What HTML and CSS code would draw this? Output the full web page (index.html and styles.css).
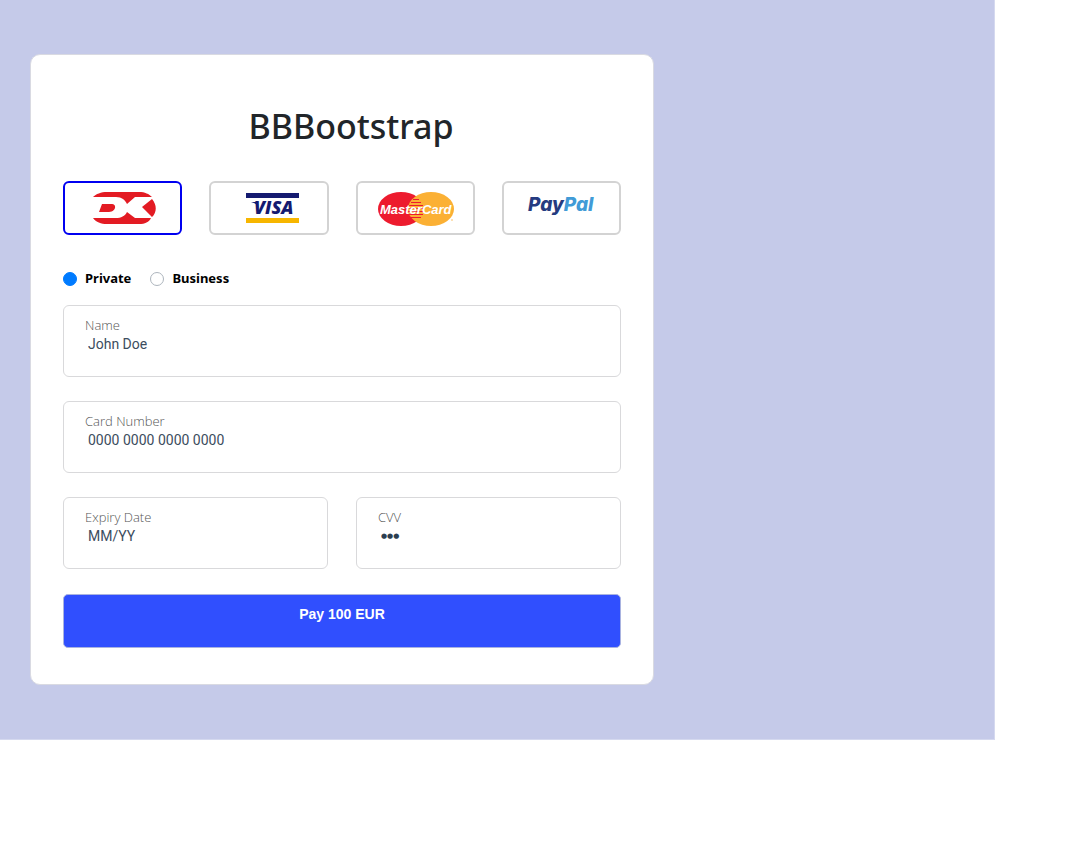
FILE: index.html
```html
<!DOCTYPE html>
<html lang="en">
<head>
<meta charset="utf-8">
<meta name="viewport" content="width=device-width, initial-scale=1">
<title>BBBootstrap</title>
<link rel="stylesheet" href="styles.css">
</head>
<body>
<main class="page">
  <form class="card">
    <h1 class="title">BBBootstrap</h1>
    <div class="methods">
      <button type="button" class="method method-active" aria-label="Dankort">
        <svg class="logo-dk" width="64" height="33" viewBox="0 0 64 33">
          <path fill="#e31b23" d="M1 5C4 2 9 0 15 0H47C53 0 57 2 60 5H43L35 12C33 8 30 5 24 5Z"/>
          <path fill="#e31b23" d="M1 26C4 30 9 32 15 32H47C53 32 57 30 59 26H43L35 20C33 24 29 26 24 26Z"/>
          <path fill="#e31b23" d="M10 12H20C25 12 24 20 17 20H7ZM50 15L60 7C65 13 65 20 60 25Z"/>
        </svg>
      </button>
      <button type="button" class="method" aria-label="Visa">
        <svg class="logo-visa" width="54" height="32" viewBox="0 0 54 32">
          <path fill="#141a70" d="M0 1H53V6H0Z"/>
          <path fill="#f7b600" d="M0 26H53V31H0Z"/>
          <path fill="#141a70" d="M5 10H12L12 15C11 12 9 11 5 10Z"/>
          <text class="visa-text" x="8" y="22">VISA</text>
        </svg>
      </button>
      <button type="button" class="method" aria-label="MasterCard">
        <svg class="logo-mc" width="76" height="36" viewBox="0 0 76 36">
          <ellipse cx="23" cy="17" rx="23" ry="17" fill="#ed1b2e"/>
          <ellipse cx="53" cy="17" rx="23" ry="17" fill="#fbb034"/>
          <path stroke="#ed1b2e" d="M35 7.500H41M33 10.500H43M31 13.500H45M30 16.500H46M30 19.500H46M31 22.500H45M33 25.500H43"/>
          <text class="mc-text" x="2" y="22">MasterCard</text>
          <circle cx="74" cy="28" r="1" fill="#fbd69b"/>
        </svg>
      </button>
      <button type="button" class="method" aria-label="PayPal">
        <svg class="logo-paypal" width="68" height="32" viewBox="0 0 68 32">
          <text class="paypal-text" x="1" y="19"><tspan fill="#253b80">Pay</tspan><tspan fill="#419bd7">Pal</tspan></text>
        </svg>
      </button>
    </div>
    <div class="types">
      <label class="type"><input class="radio" type="radio" name="type" checked>Private</label>
      <label class="type"><input class="radio" type="radio" name="type">Business</label>
    </div>
    <div class="fields">
      <div class="field field-wide">
        <label class="label" for="name">Name</label>
        <input class="input" id="name" type="text" placeholder="John Doe">
      </div>
      <div class="field field-wide">
        <label class="label" for="number">Card Number</label>
        <input class="input" id="number" type="text" placeholder="0000 0000 0000 0000">
      </div>
      <div class="field">
        <label class="label" for="expiry">Expiry Date</label>
        <input class="input" id="expiry" type="text" placeholder="MM/YY">
      </div>
      <div class="field">
        <label class="label" for="cvv">CVV</label>
        <input class="input input-cvv" id="cvv" type="password" placeholder="●●●">
      </div>
    </div>
    <button class="pay" type="submit">Pay 100 EUR</button>
  </form>
</main>
</body>
</html>
```
FILE: styles.css
```css
* { box-sizing: border-box; }

body {
  margin: 0;
  background: #fff;
  font-family: "Open Sans", "Noto Sans", sans-serif;
}

.page {
  margin-right: 84px;
  padding: 54px 30px;
  background: #c5cae9;
  border: solid #d5d9ef;
  border-width: 0 1px 1px 0;
}

.card {
  max-width: 624px;
  padding: 40px 32px 36px;
  background: #fff;
  border: 1px solid #d9dae2;
  border-radius: 10px;
}

.title {
  margin: 0 0 24px;
  padding-left: 18px;
  color: #212529;
  font-family: "Noto Sans", sans-serif;
  font-size: 34px;
  font-weight: 500;
  line-height: 62px;
  text-align: center;
}

.methods {
  display: grid;
  grid-template-columns: repeat(4, 1fr);
  gap: 27px;
}

.method {
  display: flex;
  align-items: flex-start;
  justify-content: center;
  height: 54px;
  padding: 9px 0 0;
  background: #fff;
  border: 2px solid #d3d3d3;
  border-radius: 6px;
}

.method-active { border-color: #0000f0; }

.method svg { display: block; flex: none; }

.method text {
  font-family: "Open Sans", sans-serif;
  font-style: italic;
  font-weight: 700;
}

.logo-dk { margin-left: 3px; }
.logo-visa { margin-left: 8px; }
.logo-mc { margin-left: 2px; }
.method .visa-text { font-size: 18px; font-weight: 800; fill: #141a70; }
.method .mc-text { font-family: "Liberation Sans", sans-serif; font-size: 13px; fill: #fff; }
.method .paypal-text { font-family: Inter, sans-serif; font-size: 19px; font-weight: 800; }

.types {
  display: flex;
  gap: 19px;
  margin: 33px 0 16px;
}

.type {
  display: flex;
  align-items: center;
  gap: 8px;
  color: #000;
  font-family: "Noto Sans", sans-serif;
  font-size: 13px;
  font-weight: 700;
  line-height: 21px;
}

.radio {
  appearance: none;
  width: 14px;
  height: 14px;
  margin: 0;
  background: #fff;
  border: 1px solid #adb5bd;
  border-radius: 50%;
}

.radio:checked { background: #007bff; border-color: #007bff; }

.fields {
  display: grid;
  grid-template-columns: 1fr 1fr;
  gap: 24px 28px;
}

.field {
  padding: 11px 21px 23px;
  border: 1px solid #d9d9db;
  border-radius: 6px;
}

.field-wide { grid-column: 1 / -1; }

.label {
  display: block;
  color: #555;
  font-size: 13px;
  font-weight: 300;
  line-height: 17px;
}

.input {
  display: block;
  width: 100%;
  height: 19px;
  padding: 0 3px;
  background: none;
  border: 0;
  outline: 0;
  color: #2c3e50;
  font-family: Roboto, "Liberation Sans", sans-serif;
  font-size: 14px;
}

.input::placeholder { color: #3c4d5e; opacity: 1; }

.input-cvv { font-family: "DejaVu Sans", sans-serif; font-size: 7px; }
.input-cvv::placeholder { color: #2c3e50; }

.pay {
  display: block;
  width: 100%;
  height: 54px;
  margin-top: 25px;
  padding: 0 0 14px;
  background: #304ffe;
  border: 1px solid #a9b3e0;
  border-radius: 5px;
  color: #fff;
  font-family: "Liberation Sans", sans-serif;
  font-size: 14px;
  font-weight: 700;
}
```
